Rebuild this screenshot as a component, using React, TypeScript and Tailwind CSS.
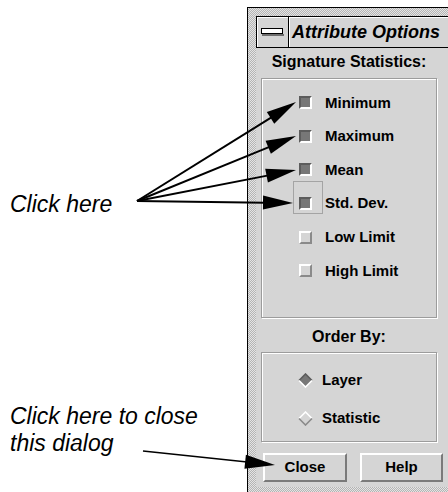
import React from "react";

const font = "font-['Liberation_Sans',Arial,sans-serif]";

// arrow with filled triangular head, computed from the two end points
function Arrow({x1, y1, x2, y2, len = 30, w = 7, sw = 2}: {x1: number; y1: number; x2: number; y2: number; len?: number; w?: number; sw?: number}) {
  const dx = x2 - x1;
  const dy = y2 - y1;
  const l = Math.hypot(dx, dy);
  const ux = dx / l;
  const uy = dy / l;
  const bx = x2 - ux * len;
  const by = y2 - uy * len;
  const px = -uy;
  const py = ux;
  const pts = `${x2},${y2} ${bx + px * w},${by + py * w} ${bx - px * w},${by - py * w}`;
  return (
    <g>
      <line x1={x1} y1={y1} x2={bx + ux * 2} y2={by + uy * 2} stroke="black" strokeWidth={sw} />
      <polygon points={pts} fill="black" />
    </g>
  );
}

function Check({on, focus}: {on: boolean; focus?: boolean}) {
  return (
    <div className="relative w-[13px] h-[13px] shrink-0">
      {focus && <div className="absolute -left-[6px] -top-[16px] w-[30px] h-[33px] border border-[#a4a4a4]" />}
      <div
        className={
          on
            ? "w-[13px] h-[13px] bg-[#777777] border-2 border-t-[#5c5c5c] border-l-[#5c5c5c] border-b-white border-r-white"
            : "w-[13px] h-[13px] bg-[#d5d5d5] border-2 border-t-white border-l-white border-b-[#8a8a8a] border-r-[#8a8a8a]"
        }
      />
    </div>
  );
}

function Diamond({on}: {on: boolean}) {
  return (
    <svg width="15" height="15" viewBox="0 0 15 15" className="shrink-0">
      <polygon points="7.5,1 14,7.5 7.5,14 1,7.5" fill={on ? "#777777" : "#d5d5d5"} />
      <polyline points="1,7.5 7.5,1 14,7.5" fill="none" stroke={on ? "#5c5c5c" : "#ffffff"} strokeWidth="1.6" />
      <polyline points="1,7.5 7.5,14 14,7.5" fill="none" stroke={on ? "#ffffff" : "#8a8a8a"} strokeWidth="1.6" />
    </svg>
  );
}

const rows = [
  {label: "Minimum", on: true},
  {label: "Maximum", on: true},
  {label: "Mean", on: true},
  {label: "Std. Dev.", on: true, focus: true},
  {label: "Low Limit", on: false},
  {label: "High Limit", on: false},
];

const groupBox = "ml-[5px] w-[176px] border border-[#9c9c9c] shadow-[inset_1px_1px_0_#ffffff,1px_1px_0_#ffffff]";
const button =
  "h-[29px] flex items-center justify-center text-[15px] font-bold text-black border-2 border-t-white border-l-white border-b-[#7a7a7a] border-r-[#7a7a7a]";

export default function App() {
  return (
    <div className={`relative w-[448px] h-[492px] overflow-hidden bg-white flex ${font}`}>
      {/* annotations */}
      <div className="w-[247px] shrink-0 flex flex-col pl-[10px] italic text-black text-[23px]">
        <p className="mt-[191px] leading-[26px]">Click here</p>
        <p className="mt-[186px] leading-[27px]">
          Click here to close
          <br />
          this dialog
        </p>
      </div>

      {/* dialog window */}
      <div className="mt-[7px] h-[485px] flex-1 flex flex-col border-l border-t border-black pl-[8px] pt-[8px] pb-[5px] bg-[repeating-conic-gradient(#b4b4b4_0_25%,#e4e4e4_0_50%)] bg-[length:2px_2px]">
        <div className="flex-1 flex flex-col bg-[#d5d5d5]">
          <div className="h-[32px] flex border-t border-l border-b border-black shrink-0">
            <div className="w-[32px] border-r border-black flex items-center justify-center shadow-[inset_1px_1px_0_#ffffff]">
              <svg width="23" height="8" viewBox="0 0 23 8">
                <rect x="0.5" y="0.5" width="21" height="5" fill="white" stroke="black" />
                <rect x="1" y="6" width="22" height="2" fill="#6e6e6e" />
              </svg>
            </div>
            <div className="flex-1 flex items-center pl-[3px] shadow-[inset_1px_1px_0_#ffffff] whitespace-nowrap overflow-hidden">
              <span className="text-[18px] font-bold italic text-black">Attribute Options</span>
            </div>
          </div>

          <div className="flex-1 flex flex-col">
            <p className="ml-[5px] w-[176px] mt-[4px] h-[20px] leading-[20px] text-center text-[16px] font-bold text-black">
              Signature Statistics:
            </p>
            <div className={`${groupBox} mt-[6px] h-[240px] pt-[7px] flex flex-col`}>
              {rows.map((r) => (
                <div key={r.label} className="h-[33.6px] flex items-center pl-[37px] gap-[13px]">
                  <Check on={r.on} focus={r.focus} />
                  <span className="text-[15px] font-bold text-black whitespace-nowrap">{r.label}</span>
                </div>
              ))}
            </div>

            <p className="ml-[5px] w-[176px] mt-[9px] h-[20px] leading-[20px] text-center text-[16px] font-bold text-black">
              Order By:
            </p>
            <div className={`${groupBox} mt-[5px] h-[90px] pt-[8px] flex flex-col`}>
              <div className="h-[38px] flex items-center pl-[36px] gap-[9px]">
                <Diamond on />
                <span className="text-[15px] font-bold text-black">Layer</span>
              </div>
              <div className="h-[38px] flex items-center pl-[36px] gap-[9px]">
                <Diamond on={false} />
                <span className="text-[15px] font-bold text-black">Statistic</span>
              </div>
            </div>

            <div className="mt-[11px] flex pl-[7px] gap-[13px]">
              <div className={`${button} w-[84px]`}>Close</div>
              <div className={`${button} w-[83px]`}>Help</div>
            </div>
          </div>
        </div>
      </div>

      {/* callout arrows drawn over the dialog */}
      <svg className="absolute inset-0 pointer-events-none" width="448" height="492" viewBox="0 0 448 492">
        <Arrow x1={137} y1={201} x2={296} y2={102} />
        <Arrow x1={137} y1={201} x2={296} y2={136} />
        <Arrow x1={137} y1={201} x2={296} y2={170} />
        <Arrow x1={137} y1={201} x2={293} y2={203} />
        <Arrow x1={143} y1={451} x2={275} y2={465} sw={1.5} />
      </svg>
    </div>
  );
}
